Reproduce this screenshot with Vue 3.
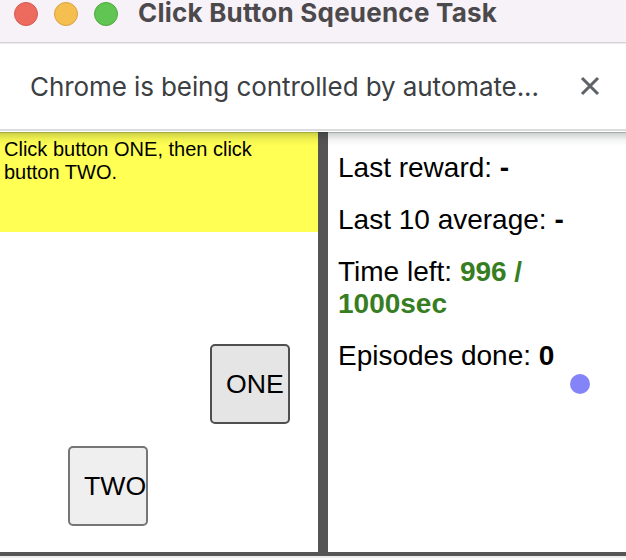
<script setup>
const lights = ['red', 'amber', 'green']
const stats = [
  { label: 'Last reward:', value: '-' },
  { label: 'Last 10 average:', value: '-' },
  { label: 'Time left:', value: '996 / 1000sec', green: true },
  { label: 'Episodes done:', value: '0' },
]
</script>

<template>
  <div class="window">
    <header class="titlebar">
      <span v-for="c in lights" :key="c" class="light" :class="c"></span>
      <h1 class="title">Click Button Sqeuence Task</h1>
    </header>
    <div class="infobar">
      <span class="message">Chrome is being controlled by automate...</span>
      <svg class="close" width="20" height="20" viewBox="0 0 20 20">
        <path d="M2 2L18 18M18 2L2 18" />
      </svg>
    </div>
    <main class="page">
      <section class="task">
        <div class="query">Click button ONE, then click button TWO.</div>
        <div class="area">
          <button class="one">ONE</button>
          <button class="two">TWO</button>
        </div>
      </section>
      <aside class="stats">
        <p v-for="s in stats" :key="s.label">
          {{ s.label }} <b :class="{ good: s.green }">{{ s.value }}</b>
        </p>
      </aside>
      <span class="pointer"></span>
    </main>
    <div class="bottom"></div>
  </div>
</template>

<style>
body { margin: 0; overflow: hidden; background: #fafafa; }
</style>

<style scoped>
.window {
  width: 626px;
  height: 560px;
  overflow: hidden;
  display: flex;
  flex-direction: column;
  font-family: "Liberation Sans", Arial, sans-serif;
  color: #000;
}
.titlebar {
  height: 42px;
  flex: none;
  display: flex;
  align-items: flex-start;
  background: #f7f2f7;
  border-bottom: 1px solid #d6d2d6;
  box-shadow: 0 1px 0 #ececee;
  padding-left: 14px;
  position: relative;
}
.light {
  width: 24px;
  height: 24px;
  margin: 2px 16px 0 0;
  border-radius: 50%;
  box-sizing: border-box;
}
.red { background: #ed6a5f; border: 1px solid #d65a50; }
.amber { background: #f5bf4f; border: 1px solid #d8a243; }
.green { background: #61c554; border: 1px solid #51a73e; }
.title {
  margin: 0 0 0 4px;
  font: 700 26px/26px Inter, sans-serif;
  letter-spacing: 0.22px;
  color: #4c494c;
  white-space: nowrap;
}
.infobar {
  height: 86px;
  flex: none;
  display: flex;
  align-items: center;
  justify-content: space-between;
  background: #fff;
  border-bottom: 2px solid #dadcde;
  padding: 0 26px 0 30px;
}
.message {
  font: 400 26px/32px Inter, sans-serif;
  padding-top: 1px;
  letter-spacing: -0.09px;
  color: #3c4043;
  white-space: nowrap;
}
.close path { fill: none; stroke: #5f6368; stroke-width: 3.1; }
.page {
  height: 420px;
  margin-top: 1px;
  box-shadow: 0 -1px 0 #fff;
  flex: none;
  display: flex;
  position: relative;
  background: #fff;
}
.page::before {
  content: "";
  position: absolute;
  inset: 0 0 auto;
  height: 14px;
  background: linear-gradient(rgba(0, 20, 10, 0.35) 1px, rgba(0, 20, 10, 0.2) 1px, rgba(0, 20, 10, 0.13) 4px, rgba(0, 20, 10, 0.05) 8px, transparent);
}
.task { width: 318px; border-right: 10px solid #555; }
.query {
  height: 100px;
  box-sizing: border-box;
  padding: 6px 20px 6px 4px;
  background: #ffff54;
  font-size: 20px;
  line-height: 23px;
}
.area { height: 320px; position: relative; }
button {
  position: absolute;
  width: 80px;
  height: 80px;
  box-sizing: border-box;
  padding: 0 0 0 14px;
  text-align: left;
  font: 26.67px/30px "Liberation Sans", Arial, sans-serif;
  color: #000;
  border: 2px solid #767676;
  border-radius: 5px;
  background: #efefef;
}
.one { left: 210px; top: 112px; background: #e5e5e5; border-color: #4f4f4f; }
.two { left: 68px; top: 214px; }
.stats { flex: 1; padding: 20px 10px 0; font-size: 28px; line-height: 32px; }
.stats p { margin: 0 0 20px; max-width: 240px; }
.good { color: #377e22; }
.pointer {
  position: absolute;
  left: 570px;
  top: 242px;
  width: 20px;
  height: 20px;
  border-radius: 50%;
  background: #8484f8;
}
.bottom { height: 4px; flex: none; background: #555; box-shadow: 0 2px 0 #ececec; }
</style>
